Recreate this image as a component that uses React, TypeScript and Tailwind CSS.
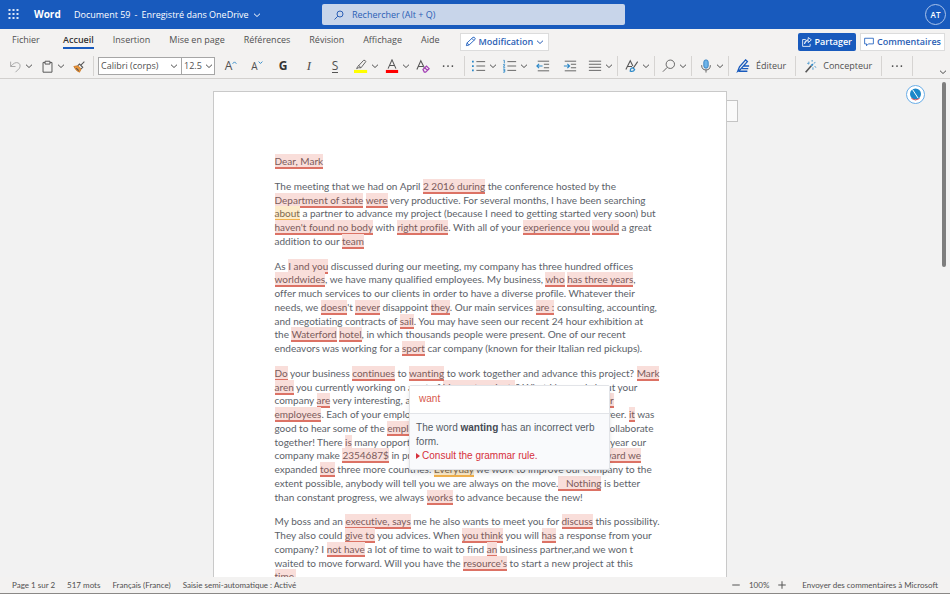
import type { ReactNode } from "react";

const TABS = ["Accueil", "Insertion", "Mise en page", "Références", "Révision", "Affichage", "Aide"];

/* [text] is a grammar error, {text} a style remark, <text> the error whose card is open. */
const PARAGRAPHS: string[][] = [
  ["[Dear, Mark]"],
  [
    "The meeting that we had on April [2 2016 during] the conference hosted by the",
    "[Department of state] [were] very productive. For several months, I have been searching",
    "{about} a partner to advance my project (because I need to getting started very soon) but",
    "[haven't found no body] with [right profile]. With all of your [experience you] [would] a great",
    "addition to our [team]",
  ],
  [
    "As [I and you] discussed during our meeting, my company has three hundred offices",
    "[worldwides], we have many qualified employees. My business, [who] [has three years],",
    "offer much services to our clients in order to have a diverse profile. Whatever their",
    "needs, we [doesn]'t [never] disappoint [they]. Our main services [are :] consulting, accounting,",
    "and negotiating contracts of [sail]. You may have seen our recent 24 hour exhibition at",
    "the [Waterford] [hotel], in which thousands people were present. One of our recent",
    "endeavors was working for a [sport] car company (known for their Italian red pickups).",
  ],
  [
    "[Do] your business [continues] to <wanting> to work together and advance this project? [Mark]",
    "[aren] you currently working on a set of [big next projects]? What I learned about your",
    "company [are] very interesting, and you have a very great respect for all of [their]",
    "[employees]. Each of your employees is valued and enjoys a rich and happy career. [it] was",
    "good to hear some of the [employees] talk about how they would also like to collaborate",
    "together! There [is] many opportunities for us to grow and change. I know last year our",
    "company make [2354687$] in profits, and this year is steadily looking up. [Forward we]",
    "expanded [too] three more countries. {Everyday} we work to improve our company to the",
    "extent possible, anybody will tell you we are always on the move.[   Nothing] is better",
    "than constant progress, we always [works] to advance because the new!",
  ],
  [
    "My boss and an [executive, says] me he also wants to meet you for [discuss] this possibility.",
    "They also could [give to] you advices. When [you think] you will [has] a response from your",
    "company? I [not have] a lot of time to wait to find [an] business partner,and we won t",
    "waited to move forward. Will you have the [resource's] to start a new project at this",
    "[time.]",
  ],
];

function Svg({ children, className = "size-4" }: { children: ReactNode; className?: string }) {
  return (
    <svg viewBox="0 0 16 16" className={className} fill="none" stroke="#555" strokeWidth="1" aria-hidden="true">
      {children}
    </svg>
  );
}

function Chevron({ className = "w-2 shrink-0" }: { className?: string }) {
  return (
    <svg viewBox="0 0 8 8" className={className} fill="none" stroke="currentColor" strokeWidth="1" aria-hidden="true">
      <path d="M1 2.7 4 5.5 7 2.7" />
    </svg>
  );
}

function Split({ label, children }: { label: string; children: ReactNode }) {
  return (
    <button type="button" aria-label={label} className="flex h-5 w-7 items-center">
      <span className="flex w-5 justify-center">{children}</span>
      <Chevron />
    </button>
  );
}

function Tool({ label, children, className = "w-6" }: { label: string; children: ReactNode; className?: string }) {
  return (
    <button type="button" aria-label={label} className={`flex h-5 items-center justify-center ${className}`}>
      {children}
    </button>
  );
}

function Sep() {
  return <span className="mx-1 h-5 w-px shrink-0 bg-[#d6d4d2]" />;
}

function Dots() {
  return (
    <Svg className="size-[14px]">
      <g fill="#444" stroke="none">
        <circle cx="3" cy="8" r="1" />
        <circle cx="8" cy="8" r="1" />
        <circle cx="13" cy="8" r="1" />
      </g>
    </Svg>
  );
}

function TitleBar() {
  return (
    <header className="flex h-[29px] shrink-0 items-center bg-[#185abd] text-[9px] text-white">
      <button type="button" aria-label="Lanceur d'applications" className="ml-[6px] w-4">
        <svg viewBox="0 0 16 16" className="size-4" fill="#dce7f7" aria-hidden="true">
          {[2, 6, 10].map((y) => [3, 7, 11].map((x) => <rect key={`${x}-${y}`} x={x - 0.5} y={y} width="2" height="2" />))}
        </svg>
      </button>
      <span className="ml-3 w-10 text-[10px] font-bold">Word</span>
      <button type="button" className="flex w-[248px] items-center gap-1 whitespace-nowrap">
        <span>Document 59</span>
        <span>-</span>
        <span>Enregistré dans OneDrive</span>
        <Chevron />
      </button>
      <label className="flex h-[21px] w-[303px] items-center gap-2 rounded-xs bg-[#c8d5ea] pl-3 text-[#2b5fb5]">
        <svg viewBox="0 0 10 10" className="size-[10px]" fill="none" stroke="currentColor" aria-hidden="true">
          <circle cx="6" cy="4" r="3" />
          <path d="M3.8 6.2.5 9.5" />
        </svg>
        <input
          type="text"
          aria-label="Rechercher"
          placeholder="Rechercher (Alt + Q)"
          className="min-w-0 flex-1 bg-transparent outline-none placeholder:text-[#2b5fb5]"
        />
      </label>
      <button type="button" className="mr-1 ml-auto size-[21px] rounded-full border border-[#a9c2ea] text-[8px] font-semibold">
        AT
      </button>
    </header>
  );
}

function TabBar() {
  return (
    <nav className="flex h-[25px] shrink-0 items-center pr-[5px] pl-3">
      <div className="flex gap-[19px] pb-[3px]">
        <a href="#fichier" className="mr-1 w-7">Fichier</a>
        {TABS.map((t) => (
          <a
            key={t}
            href={`#${t}`}
            className={
              t === "Accueil"
                ? "relative font-semibold text-[#333] after:absolute after:inset-x-0 after:top-[14px] after:h-[2px] after:bg-[#185abd]"
                : "whitespace-nowrap"
            }
          >
            {t}
          </a>
        ))}
      </div>
      <button type="button" className="ml-5 flex h-[18px] items-center gap-[3px] border border-[#dcdcdc] bg-white px-1 font-semibold text-[#2b5fb5]">
        <Svg className="size-[11px]">
          <path stroke="#185abd" strokeWidth="1.3" d="M2 14l1-4 8.500-8q2-1 3 1t0 2L6 13zM3 10l3 3M10 3.500l3 3" />
        </Svg>
        Modification
        <Chevron />
      </button>
      <button type="button" className="ml-auto flex h-[18px] items-center gap-[3px] rounded-xs bg-[#185abd] px-1 font-semibold text-white">
        <Svg className="size-[10px]">
          <path stroke="#fff" strokeWidth="1.3" d="M6 4H1v11h12v-4M4 11q1-5 6-5.500V9l5-4.500L10 .8V4Q4 5 4 11z" />
        </Svg>
        Partager
      </button>
      <button type="button" className="ml-1 flex h-[18px] items-center gap-[3px] border border-[#dcdcdc] bg-white px-[3px] font-semibold text-[#2b5fb5]">
        <Svg className="size-[10px]">
          <path stroke="#185abd" strokeWidth="1.3" d="M1 2h14v9H7l-3 3v-3H1z" />
        </Svg>
        Commentaires
      </button>
    </nav>
  );
}

function Toolbar() {
  return (
    <div className="flex h-[25px] shrink-0 items-center border-b border-[#d2d0ce] pl-[5px]">
      <div className="flex items-center gap-1">
        <Split label="Annuler">
          <Svg className="size-[13px]"><path stroke="#a8a8a8" strokeWidth="1.2" d="M2 2v6h6M2 8q5-6 9-4.500t2 6.500l-5 5" /></Svg>
        </Split>
        <Split label="Coller">
          <Svg className="size-[13px]"><path strokeWidth="1.200" d="M5 3H2.500v12h11V3H11M5 1.500h6V5H5z" /></Svg>
        </Split>
        <Tool label="Reproduire la mise en forme" className="w-5">
          <Svg className="size-[13px]">
            <path fill="#e8963c" stroke="#c9731d" d="M1 8l5-1 4 4-2 4q-4-1-7-7z" />
            <path stroke="#555" strokeWidth="1.3" d="M6 7l2-2 4 4-2 2M10 6l4-4M4 10l3 3" />
          </Svg>
        </Tool>
      </div>
      <Sep />
      <select aria-label="Police" className="h-[18px] w-[84px] appearance-none border border-[#a6a6a6] bg-white pl-[2px]">
        <option>Calibri (corps)</option>
      </select>
      <Chevron className="-ml-3 w-2 shrink-0" />
      <select aria-label="Taille de police" className="ml-[3px] h-[18px] w-[34px] appearance-none border border-[#a6a6a6] bg-white pl-[2px]">
        <option>12.5</option>
      </select>
      <Chevron className="-ml-[10px] w-2 shrink-0" />
      <div className="ml-[5px] flex items-center">
        <Tool label="Agrandir la police" className="w-[26px] text-[12px]">
          A<Svg className="mb-2 size-[5px]"><path stroke="#2b88c8" strokeWidth="3" d="M2 12l6-6 6 6" /></Svg>
        </Tool>
        <Tool label="Réduire la police" className="w-[26px] text-[10px]">
          A<Svg className="mb-2 size-[5px]"><path stroke="#2b88c8" strokeWidth="3" d="M2 5l6 6 6-6" /></Svg>
        </Tool>
        <Tool label="Gras" className="w-[26px] text-[12px] font-bold text-[#333]">G</Tool>
        <Tool label="Italique" className="w-[26px] font-['Liberation_Serif',serif] text-[13px] italic">I</Tool>
        <Tool label="Souligné" className="w-[26px] text-[12px]"><span className="border-b border-[#555] leading-[13px]">S</span></Tool>
      </div>
      <div className="ml-[3px] flex items-center gap-[3px]">
        <Split label="Surlignage">
          <Svg className="size-[14px]">
            <path fill="#ffff00" stroke="none" d="M0 12.500h15V16H0z" />
            <path d="M4 9l7-7.500q2-.5 2.500 1.500L8 10H5l-2 1zM5 7l3 3" />
          </Svg>
        </Split>
        <Split label="Couleur de police">
          <Svg className="size-[14px]">
            <path fill="#ff0000" stroke="none" d="M1 12.500h14V16H1z" />
            <path strokeWidth="1.200" d="M3.500 11L8 1l4.500 10M5 7.500h6" />
          </Svg>
        </Split>
        <Tool label="Effacer la mise en forme" className="w-5">
          <Svg className="size-[14px]">
            <path strokeWidth="1.200" d="M1 12L5.500 2l4 8M3 8.500h5" />
            <path stroke="#a33fb5" strokeWidth="1.400" d="M8 12l4-4 3 3-4 4H9.500zM10 10l3 3" />
          </Svg>
        </Tool>
        <Tool label="Plus d'options"><Dots /></Tool>
      </div>
      <Sep />
      <div className="flex items-center gap-[3px]">
        <Split label="Puces">
          <Svg className="size-[14px]">
            <path d="M5 3h10M5 8h10M5 13h10" />
            <path stroke="#2b88c8" strokeWidth="2" d="M0 3h2M0 8h2M0 13h2" />
          </Svg>
        </Split>
        <Split label="Numérotation">
          <Svg className="size-[14px]">
            <path d="M5 3h10M5 8h10M5 13h10" />
            <path stroke="#2b88c8" d="M.5 1.500h1V5M0 6.500h2L.5 9.500H2.500M0 11.500h2v3.500H0M.5 13H2" />
          </Svg>
        </Split>
        <Tool label="Diminuer le retrait">
          <Svg className="size-[14px]">
            <path d="M2 2.500h13M9 6h6M9 10h6M2 13.500h13" />
            <path stroke="#2b88c8" strokeWidth="1.300" d="M7.500 8H1M3.500 5.500L1 8l2.500 2.500" />
          </Svg>
        </Tool>
        <Tool label="Augmenter le retrait">
          <Svg className="size-[14px]">
            <path d="M2 2.500h13M9 6h6M9 10h6M2 13.500h13" />
            <path stroke="#2b88c8" strokeWidth="1.300" d="M1 8h6.500M5 5.500L7.500 8 5 10.500" />
          </Svg>
        </Tool>
        <Split label="Alignement">
          <Svg className="size-[14px]"><path d="M1 2.500h14M1 6h14M1 9.500h14M1 13h14" /></Svg>
        </Split>
      </div>
      <Sep />
      <Split label="Styles">
        <Svg className="size-[14px]">
          <path strokeWidth="1.200" d="M1 12L6 2l3 6M3 8.500h5M14.500 3L9 11" />
          <path stroke="#2b88c8" strokeWidth="1.400" d="M9 10q-3 0-3 4 4 1 5-2z" />
        </Svg>
      </Split>
      <Sep />
      <Split label="Rechercher">
        <Svg className="size-[14px]"><circle cx="9.500" cy="6" r="4.800" /><path d="M6 9.500L1 14.500" /></Svg>
      </Split>
      <Sep />
      <Split label="Dicter">
        <Svg className="size-[14px]">
          <rect x="5.500" y="1" width="5" height="9.500" rx="2.500" fill="#6fb4e8" stroke="#2b7cc0" />
          <path d="M3 7q0 5.500 5 5.500T13 7M8 12.500V15.500" />
        </Svg>
      </Split>
      <Sep />
      <button type="button" className="flex items-center gap-[3px] pr-[5px]">
        <span className="flex w-5 justify-center">
          <Svg className="size-[14px]">
            <path stroke="#185abd" strokeWidth="1.500" d="M2 14l2-5 7-8 2 2-8 9zM9 8h6M7 11h7M3 14h10" />
          </Svg>
        </span>
        Éditeur
      </button>
      <Sep />
      <button type="button" className="flex items-center gap-[3px] pr-[5px]">
        <span className="flex w-5 justify-center">
          <Svg className="size-[13px]">
            <path stroke="#555" strokeWidth="2" d="M2 15l7-8" />
            <path stroke="#2b88c8" strokeWidth="2" d="M9 7l2-2" />
            <path stroke="#2b88c8" d="M6 2v3M10 0v2M14 3l-2 1M13 8l2 1M11 9v3M4 4l2 1" />
          </Svg>
        </span>
        Concepteur
      </button>
      <Sep />
      <Tool label="Autres commandes" className="w-[22px]"><Dots /></Tool>
      <Sep />
      <button type="button" aria-label="Réduire le ruban" className="mt-3 mr-[3px] ml-auto"><Chevron /></button>
    </div>
  );
}

function Suggestion() {
  return (
    <span
      role="dialog"
      aria-label="Suggestion"
      className="absolute top-[18px] left-0 z-10 block w-[201px] rounded-xs border border-[#e2e4e8] bg-[#f9fafc] font-['Liberation_Sans',Arial,sans-serif] text-[10px] leading-[14px] whitespace-normal text-[#555c66] shadow-md"
    >
      <button type="button" className="block h-7 w-full border-b border-[#e2e4e8] bg-white pl-[9px] text-left text-[#d8584c]">
        want
      </button>
      <span className="block px-[6px] pt-[7px] pb-[6px]">
        The word <b className="text-[#454a54]">wanting</b> has an incorrect verb form.
        <a href="#regle" className="flex items-center gap-[2px] text-[#d6303c]">
          <svg viewBox="0 0 4 8" className="h-2 w-1" fill="currentColor" aria-hidden="true"><path d="M0 1l4 3-4 3z" /></svg>
          Consult the grammar rule.
        </a>
      </span>
    </span>
  );
}

function ErrorMark({ children }: { children: ReactNode }) {
  return <mark className="border-b-2 border-[#dc7265] bg-[#f9deda] pt-px text-[#7b5b5b]">{children}</mark>;
}

function Line({ text }: { text: string }) {
  return (
    <span className="block whitespace-pre">
      {text.split(/(\[[^\]]*\]|\{[^}]*\}|<[^>]*>)/).map((part, i) => {
        const kind = part[0];
        const inner = part.slice(1, -1);
        if (kind === "[") return <ErrorMark key={i}>{inner}</ErrorMark>;
        if (kind === "{")
          return <mark key={i} className="border-b-2 border-[#f2b24c] bg-[#fdeccb] pt-px text-[#7d6a50]">{inner}</mark>;
        if (kind === "<")
          return (
            <span key={i} className="relative">
              <ErrorMark>{inner}</ErrorMark>
              <Suggestion />
            </span>
          );
        return part;
      })}
    </span>
  );
}

function Canvas() {
  return (
    <main className="flex min-h-0 flex-1 overflow-hidden bg-[#f2f2f2]">
      <div className="relative flex flex-1 justify-center pt-3">
        <div className="relative w-[514px]">
          <article className="flex min-h-full flex-col gap-[11px] border border-[#c9c9c9] bg-white px-[61px] pt-[63px] font-[Lato,'Open_Sans',sans-serif] text-[10px] leading-snug text-[#5c6269] [font-variant-ligatures:none]">
            {PARAGRAPHS.map((lines, i) => (
              <p key={i}>{lines.map((l) => <Line key={l} text={l} />)}</p>
            ))}
          </article>
          <span className="absolute top-[9px] left-full h-[22px] w-[11px] border border-l-0 border-[#c4c4c4] bg-[#fafafa]" />
        </div>
        <button type="button" aria-label="Correcteur" className="absolute top-[6px] right-[14px] size-[19px] rounded-full border border-[#6aaee8] bg-white">
          <svg viewBox="0 0 17 17" className="size-[17px]" aria-hidden="true">
            <circle cx="8.500" cy="8" r="5.500" fill="#1b87c9" />
            <path d="M5.500 3.500L11 12" stroke="#fff" />
            <path d="M4.500 12.500q4 3 8 0" stroke="#e0525a" fill="none" />
          </svg>
        </button>
      </div>
      <div className="w-[11px] shrink-0 pt-[3px] pl-[3px]">
        <div className="h-[185px] w-1 rounded-full bg-[#7e7e7e]" />
      </div>
    </main>
  );
}

function StatusBar() {
  return (
    <footer className="flex h-[17px] shrink-0 items-center gap-3 border-b border-[#8a8886] bg-[#f3f2f1] px-3 font-[Lato,'Open_Sans',sans-serif] text-[8px] whitespace-nowrap">
      <span>Page 1 sur 2</span>
      <span>517 mots</span>
      <span>Français (France)</span>
      <span>Saisie semi-automatique : Activé</span>
      <div className="mr-[3px] ml-auto flex items-center gap-2">
        <button type="button" aria-label="Zoom arrière"><Svg className="size-[10px]"><path d="M2 8h12" strokeWidth="1.600" /></Svg></button>
        <span>100%</span>
        <button type="button" aria-label="Zoom avant"><Svg className="size-[10px]"><path d="M2 8h12M8 2v12" strokeWidth="1.600" /></Svg></button>
      </div>
      <a href="#commentaires">Envoyer des commentaires à Microsoft</a>
    </footer>
  );
}

export default function App() {
  return (
    <div className="flex h-screen flex-col bg-[#f3f2f1] font-['Open_Sans','Noto_Sans',sans-serif] text-[9px] text-[#505050]">
      <TitleBar />
      <TabBar />
      <Toolbar />
      <Canvas />
      <StatusBar />
    </div>
  );
}
